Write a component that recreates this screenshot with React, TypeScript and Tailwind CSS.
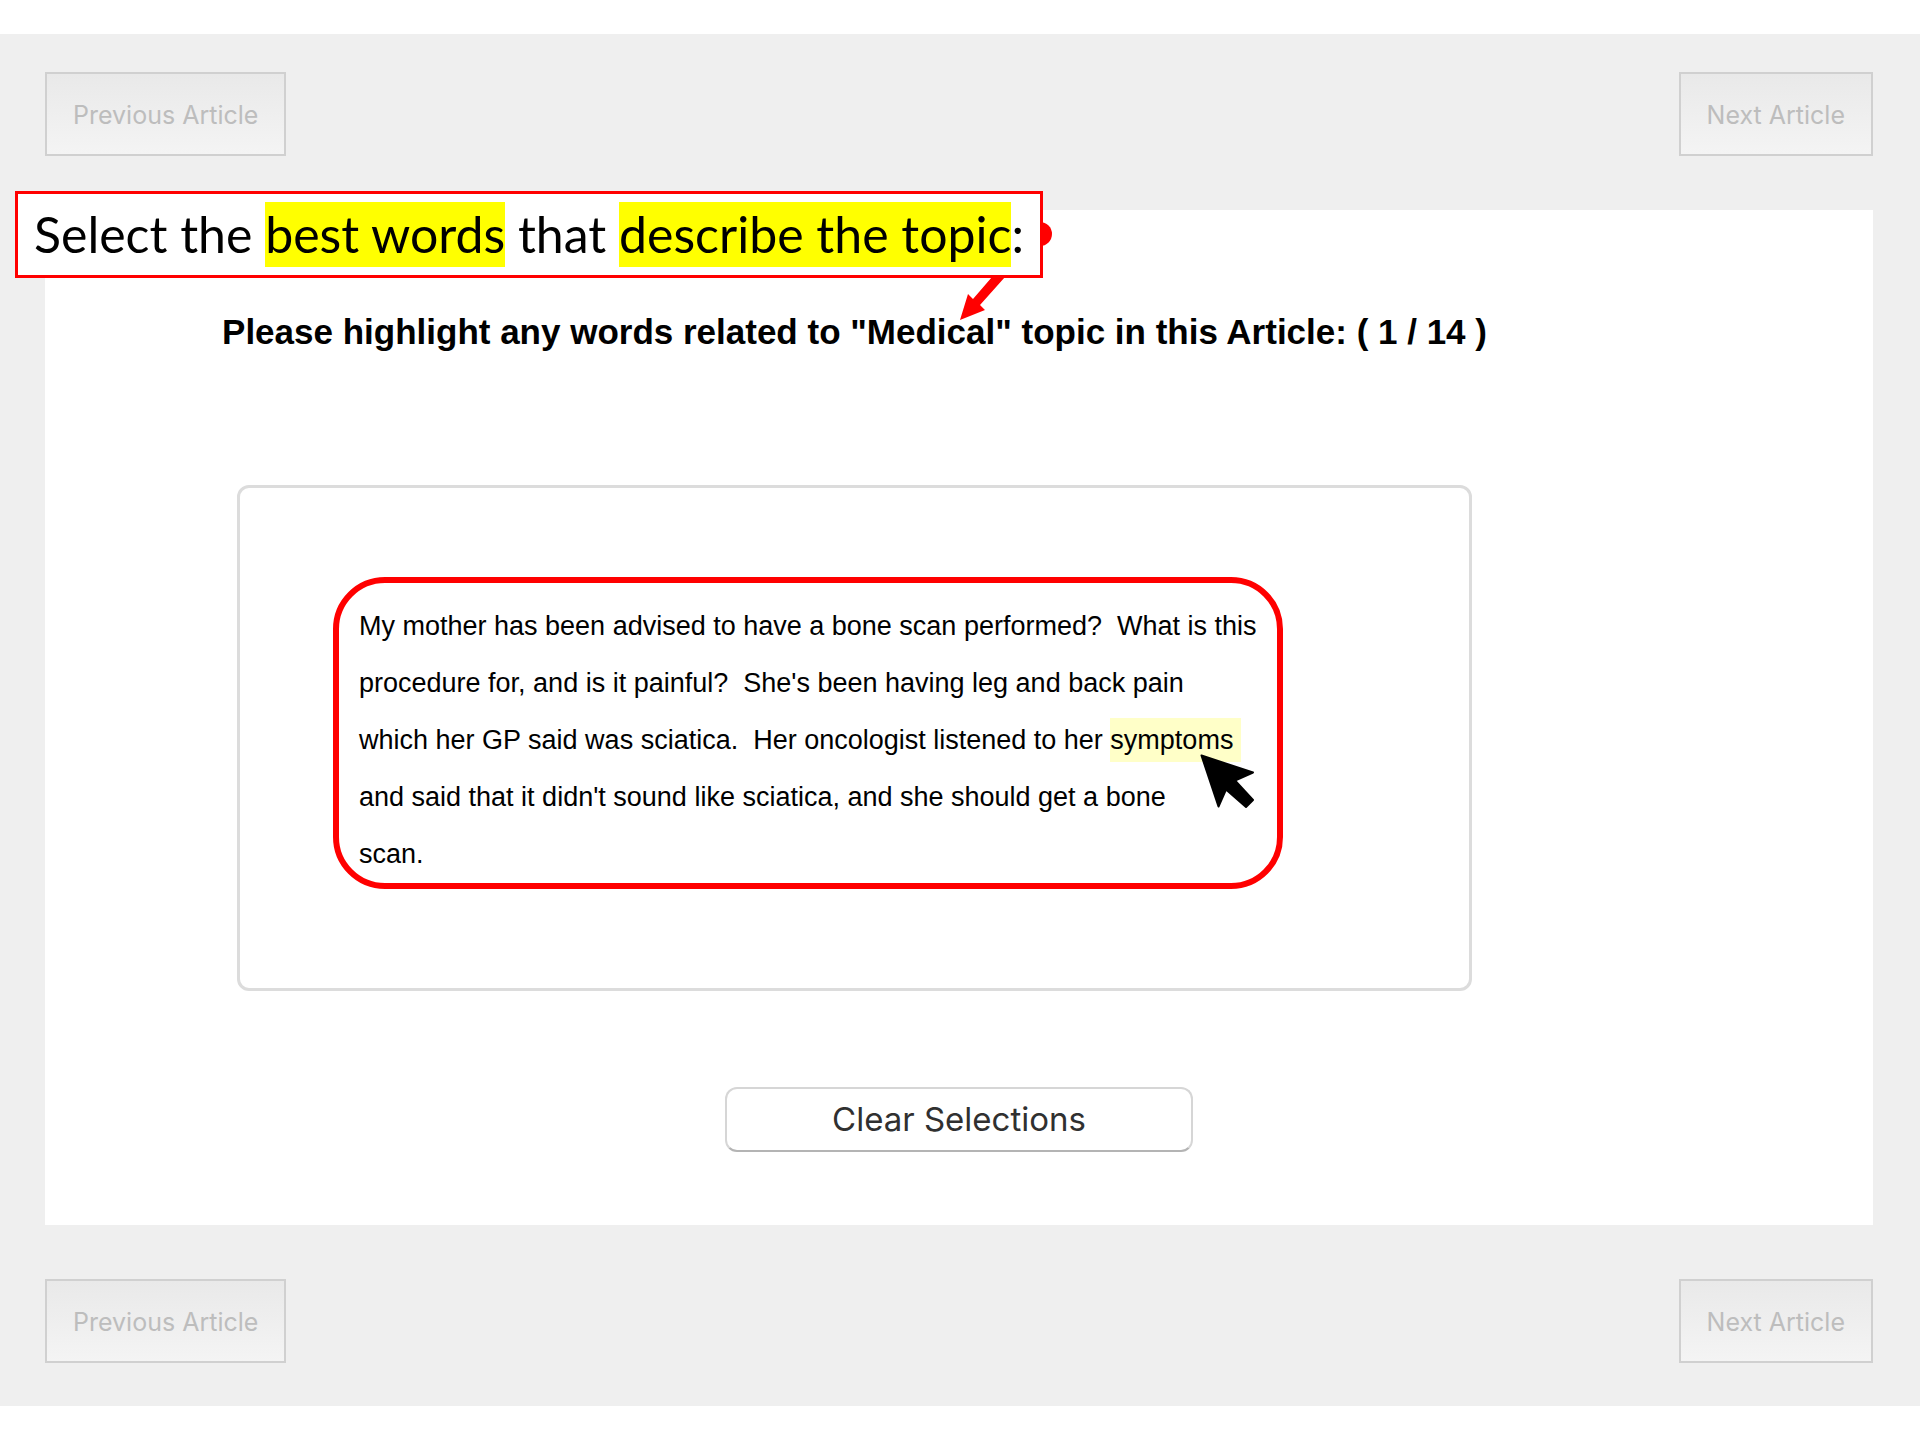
import React from "react";

function ArticleNav({ label }: { label: string }) {
  return (
    <nav aria-label={label} className="flex items-center justify-between pr-[47px] pl-[45px]">
      <NavButton>Previous Article</NavButton>
      <NavButton>Next Article</NavButton>
    </nav>
  );
}

function NavButton({ children }: { children: React.ReactNode }) {
  return (
    <button
      type="button"
      disabled
      className="h-[84px] border-2 border-[#d0d0d0] bg-linear-to-b from-[#e9e9e9] to-[#f4f4f4] px-[26px] pt-1 text-[25px] text-[#bdbdbd]"
    >
      {children}
    </button>
  );
}

function Callout() {
  return (
    <div className="absolute top-[157px] left-[15px]">
      <svg
        aria-hidden="true"
        className="absolute top-0 left-[900px]"
        width="160"
        height="140"
        viewBox="915 191 160 140"
        fill="#ff0000"
      >
        <circle cx="1040" cy="234" r="12" />
        <path d="M992 277H1005L980 305L985 310L960 320L968 294L973 299Z" />
      </svg>
      <p className="relative flex h-[87px] items-center border-3 border-[#ff0000] bg-white pr-4 pl-4 font-['Lato',sans-serif] text-[50px] leading-[65px] whitespace-pre text-black">
        Select the <mark className="bg-[#ffff00]">best words</mark> that{" "}
        <mark className="bg-[#ffff00]">describe the topic</mark>:
      </p>
    </div>
  );
}

function Cursor() {
  return (
    <svg
      aria-hidden="true"
      className="absolute top-[36px] left-[90px]"
      width="56"
      height="56"
      viewBox="0 0 56 56"
    >
      <path
        d="M1.5 1.5L53 18.5L35 26.5L53 46L46 53L26 35.5L18.5 52.5Z"
        fill="#000"
        stroke="#000"
        strokeWidth="2"
        strokeLinejoin="round"
      />
    </svg>
  );
}

export default function App() {
  return (
    <div className="min-h-screen bg-white py-[34px] font-['Inter',sans-serif]">
      <div className="relative bg-[#efefef] pt-[38px] pb-[43px]">
        <ArticleNav label="Article navigation, top" />

        <main className="mt-[54px] mr-[47px] mb-[54px] ml-[45px] bg-white pt-[101px] pb-[73px]">
          <div className="ml-48 max-w-[1235px]">
            <h1 className="flex justify-center font-['Liberation_Sans',sans-serif] text-[35px] leading-[42px] font-bold whitespace-nowrap text-black">
              Please highlight any words related to "Medical" topic in this Article: ( 1 / 14 )
            </h1>
            <section className="mt-[132px] rounded-xl border-3 border-[#dcdcdc] px-[93px] pt-[89px] pb-[99px]">
              <div className="max-w-[950px] rounded-[52px] border-6 border-[#ff0000] pt-[15px] pl-5">
                <p className="font-['Liberation_Sans',sans-serif] text-[27px] leading-[57px] whitespace-pre text-black">
                  {"My mother has been advised to have a bone scan performed?  What is this\n"}
                  {"procedure for, and is it painful?  She's been having leg and back pain\n"}
                  {"which her GP said was sciatica.  Her oncologist listened to her "}
                  <mark className="relative bg-[#ffffc8] py-[7px]">
                    {"symptoms "}
                    <Cursor />
                  </mark>
                  {"\nand said that it didn't sound like sciatica, and she should get a bone\nscan."}
                </p>
              </div>
            </section>
          </div>
          <div className="mt-24 flex justify-center">
            <button
              type="button"
              className="h-[65px] w-[468px] rounded-xl border-2 border-[#d6d6d6] border-b-[#b4b4b4] bg-white text-[33px] text-[#303030]"
            >
              Clear Selections
            </button>
          </div>
        </main>

        <ArticleNav label="Article navigation, bottom" />
        <Callout />
      </div>
    </div>
  );
}
